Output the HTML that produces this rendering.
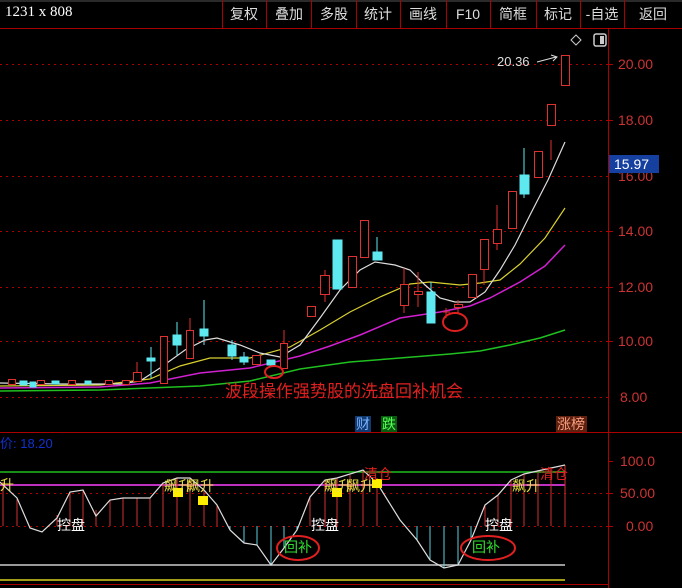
<!DOCTYPE html>
<html><head><meta charset="utf-8"><style>
html,body{margin:0;padding:0;background:#000;width:682px;height:588px;overflow:hidden}
svg{display:block}
text{font-family:"Liberation Sans","Noto Sans CJK SC",sans-serif}
</style></head><body>
<svg width="682" height="588" viewBox="0 0 682 588" xmlns="http://www.w3.org/2000/svg">
<rect width="682" height="588" fill="#000"/>
<!-- top bar -->
<line x1="0" y1="1" x2="682" y2="1" fill="none" stroke="#555"/>
<line x1="0" y1="28.5" x2="682" y2="28.5" stroke="#a00" />
<text x="5" y="16" fill="#fff" font-family="Liberation Serif,serif" font-size="15" style="font-family:'Liberation Serif',serif">1231 x 808</text>
<g stroke="#a00">
<line x1="222.5" y1="0" x2="222.5" y2="28"/><line x1="266.5" y1="0" x2="266.5" y2="28"/><line x1="311.5" y1="0" x2="311.5" y2="28"/><line x1="356.5" y1="0" x2="356.5" y2="28"/><line x1="400.5" y1="0" x2="400.5" y2="28"/><line x1="446.5" y1="0" x2="446.5" y2="28"/><line x1="490.5" y1="0" x2="490.5" y2="28"/><line x1="536.5" y1="0" x2="536.5" y2="28"/><line x1="580.5" y1="0" x2="580.5" y2="28"/><line x1="624.5" y1="0" x2="624.5" y2="28"/>
</g>
<g fill="#ddd" font-size="14" text-anchor="middle">
<text x="244" y="19">复权</text><text x="289" y="19">叠加</text><text x="334" y="19">多股</text><text x="378" y="19">统计</text><text x="423" y="19">画线</text><text x="468" y="19">F10</text><text x="513" y="19">简框</text><text x="558" y="19">标记</text><text x="602" y="19">-自选</text><text x="653" y="19">返回</text>
</g>
<!-- axis lines -->
<line x1="608.5" y1="29" x2="608.5" y2="588" stroke="#a00"/>
<line x1="0" y1="432.5" x2="682" y2="432.5" stroke="#a00"/>
<line x1="0" y1="584.5" x2="608" y2="584.5" stroke="#a00"/>
<!-- price grid -->
<g stroke="#a00" stroke-dasharray="2,4">
<line x1="0" y1="64.5" x2="608" y2="64.5"/><line x1="0" y1="120.5" x2="608" y2="120.5"/><line x1="0" y1="176.5" x2="608" y2="176.5"/><line x1="0" y1="231.5" x2="608" y2="231.5"/><line x1="0" y1="287.5" x2="608" y2="287.5"/><line x1="0" y1="341.5" x2="608" y2="341.5"/><line x1="0" y1="397.5" x2="608" y2="397.5"/>
<line x1="0" y1="493.5" x2="608" y2="493.5"/><line x1="0" y1="526.5" x2="608" y2="526.5"/>
</g>
<g fill="#c33" font-size="14">
<text x="618" y="69">20.00</text><text x="618" y="125">18.00</text><text x="618" y="181">16.00</text><text x="618" y="236">14.00</text><text x="618" y="292">12.00</text><text x="618" y="346">10.00</text><text x="620" y="402">8.00</text>
<text x="620" y="466">100.0</text><text x="620" y="498">50.00</text><text x="626" y="531">0.00</text>
</g>
<g stroke="#a00"><line x1="608" y1="64.5" x2="613" y2="64.5"/><line x1="608" y1="120.5" x2="613" y2="120.5"/><line x1="608" y1="231.5" x2="613" y2="231.5"/><line x1="608" y1="287.5" x2="613" y2="287.5"/><line x1="608" y1="341.5" x2="613" y2="341.5"/><line x1="608" y1="461.5" x2="613" y2="461.5"/><line x1="608" y1="493.5" x2="613" y2="493.5"/><line x1="608" y1="526.5" x2="613" y2="526.5"/></g>
<rect x="609" y="155" width="50" height="18" fill="#1540a0"/>
<text x="614" y="169" fill="#fff" font-size="14">15.97</text>
<!-- top icons -->
<path d="M576 35 L581 40 L576 45 L571 40 Z" fill="none" stroke="#ccc"/>
<rect x="594" y="34" width="12" height="12" rx="2" fill="none" stroke="#ccc" stroke-width="1.5"/><rect x="600" y="36" width="4" height="8" fill="#ccc"/>
<text x="497" y="66" fill="#ddd" font-size="13">20.36</text>
<path d="M537 62 L556 57 M551 55 L557 57 L553 61" stroke="#ddd" fill="none"/>
<!-- MAs -->
<polyline fill="none" stroke="#1fc01f" stroke-width="1.5" points="0,391 100,390 200,386 250,381 300,369 350,362 400,358 450,354 480,351 510,345 540,338 565,330"/>
<polyline fill="none" stroke="#d020d0" stroke-width="1.5" points="0,388 100,387 150,383 200,373 250,368 300,356 330,346 360,335 400,318 440,312 470,306 490,298 520,282 545,266 565,245"/>
<polyline fill="none" stroke="#d8d030" stroke-width="1.2" points="0,386 100,385 150,379 180,366 210,358 250,358 290,347 320,330 350,312 380,297 410,284 430,282 460,285 480,283 500,280 520,264 545,238 565,208"/>
<polyline fill="none" stroke="#ddd" stroke-width="1.2" points="0,383 60,384 120,384 140,381 160,368 185,350 205,340 217,338 240,345 260,353 280,357 300,345 320,318 340,290 360,270 375,262 395,265 410,270 425,285 440,298 455,302 470,302 485,292 500,270 515,245 530,215 548,180 565,142"/>
<!-- candles -->
<g stroke-width="1">
<g stroke="#e03030" fill="#000">
<rect x="8.5" y="379.5" width="7" height="5"/><rect x="37.5" y="380.5" width="7" height="4"/><rect x="68.5" y="380.5" width="7" height="4"/><rect x="105.5" y="380.5" width="7" height="4"/><rect x="122.5" y="380.5" width="7" height="4"/>
<line x1="137" y1="362" x2="137" y2="372"/><rect x="133.5" y="372.5" width="8" height="9"/>
<rect x="160.5" y="336.5" width="7" height="47"/>
<line x1="190" y1="318" x2="190" y2="330"/><rect x="186.5" y="330.5" width="7" height="28"/>
<rect x="252.5" y="355.5" width="8" height="9"/>
<line x1="284" y1="330" x2="284" y2="343"/><rect x="280.5" y="343.5" width="7" height="25"/>
<rect x="307.5" y="306.5" width="8" height="10"/>
<line x1="325" y1="270" x2="325" y2="275"/><line x1="325" y1="294" x2="325" y2="302"/><rect x="320.5" y="275.5" width="9" height="19"/>
<rect x="348.5" y="256.5" width="8" height="31"/>
<rect x="360.5" y="220.5" width="8" height="37"/>
<line x1="404" y1="268" x2="404" y2="313"/><rect x="400.5" y="284.5" width="8" height="21"/>
<line x1="418" y1="272" x2="418" y2="307"/><rect x="414.5" y="291.5" width="8" height="3"/>
<line x1="446" y1="308" x2="446" y2="318"/><line x1="443" y1="312" x2="450" y2="312"/>
<line x1="458" y1="300" x2="458" y2="313"/><rect x="454.5" y="304.5" width="8" height="3"/>
<rect x="468.5" y="274.5" width="8" height="23"/>
<line x1="484" y1="269" x2="484" y2="285"/><rect x="480.5" y="239.5" width="8" height="30"/>
<line x1="497" y1="205" x2="497" y2="250"/><rect x="493.5" y="229.5" width="8" height="14"/>
<rect x="508.5" y="191.5" width="8" height="37"/>
<rect x="534.5" y="151.5" width="8" height="26"/>
<line x1="551" y1="140" x2="551" y2="160"/><rect x="547.5" y="104.5" width="8" height="21"/>
<rect x="561.5" y="55.5" width="8" height="30"/>
</g>
<g stroke="#5ee8f0" fill="#5ee8f0">
<rect x="20" y="381" width="7" height="4"/><rect x="30" y="382" width="6" height="5"/><rect x="52" y="381" width="7" height="3"/><rect x="85" y="381" width="6" height="3"/>
<line x1="151" y1="347" x2="151" y2="378"/><rect x="147" y="358" width="8" height="3"/>
<line x1="177" y1="322" x2="177" y2="355"/><rect x="173" y="335" width="8" height="10"/>
<line x1="204" y1="300" x2="204" y2="345"/><rect x="200" y="329" width="8" height="7"/>
<line x1="232" y1="340" x2="232" y2="360"/><rect x="228" y="345" width="8" height="11"/>
<line x1="244" y1="352" x2="244" y2="365"/><rect x="240" y="357" width="8" height="5"/>
<rect x="267" y="360" width="8" height="5"/>
<rect x="333" y="240" width="9" height="49"/>
<line x1="377" y1="237" x2="377" y2="260"/><rect x="373" y="252" width="9" height="8"/>
<line x1="431" y1="282" x2="431" y2="323"/><rect x="427" y="292" width="8" height="31"/>
<line x1="524" y1="148" x2="524" y2="198"/><rect x="520" y="175" width="9" height="19"/>
</g>
</g>
<ellipse cx="274" cy="372" rx="9" ry="6" fill="none" stroke="#e02020" stroke-width="2"/>
<ellipse cx="455" cy="322" rx="12" ry="9" fill="none" stroke="#e02020" stroke-width="2"/>
<text x="225" y="397" fill="#e02020" font-size="17">波段操作强势股的洗盘回补机会</text>
<rect x="355" y="416" width="16" height="16" fill="#103a70"/><text x="356" y="429" fill="#7ab0ff" font-size="14">财</text>
<rect x="381" y="416" width="16" height="16" fill="#0a5a10"/><text x="382" y="429" fill="#5f5" font-size="14">跌</text>
<rect x="556" y="416" width="31" height="16" fill="#602010"/><text x="557" y="429" fill="#f8a080" font-size="14">涨榜</text>
<!-- indicator -->
<text x="0" y="448" fill="#1030d0" font-size="13">价: 18.20</text>
<line x1="0" y1="472" x2="565" y2="472" stroke="#20c020" stroke-width="1.5"/>
<line x1="0" y1="485" x2="565" y2="485" stroke="#c030c0" stroke-width="2"/>
<line x1="0" y1="565" x2="565" y2="565" stroke="#ccc" stroke-width="1.5"/>
<line x1="0" y1="580" x2="565" y2="580" stroke="#d8d020" stroke-width="1.5"/>
<g stroke="#d03030">
<line x1="3" y1="526" x2="3" y2="482"/><line x1="17" y1="526" x2="17" y2="498"/><line x1="57" y1="526" x2="57" y2="515"/><line x1="70" y1="526" x2="70" y2="492"/><line x1="83" y1="526" x2="83" y2="490"/><line x1="96" y1="526" x2="96" y2="510"/><line x1="110" y1="526" x2="110" y2="500"/><line x1="123" y1="526" x2="123" y2="498"/><line x1="137" y1="526" x2="137" y2="498"/><line x1="150" y1="526" x2="150" y2="498"/><line x1="163" y1="526" x2="163" y2="483"/><line x1="177" y1="526" x2="177" y2="478"/><line x1="190" y1="526" x2="190" y2="478"/><line x1="204" y1="526" x2="204" y2="490"/><line x1="217" y1="526" x2="217" y2="505"/>
<line x1="310" y1="526" x2="310" y2="497"/><line x1="325" y1="526" x2="325" y2="480"/><line x1="337" y1="526" x2="337" y2="478"/><line x1="350" y1="526" x2="350" y2="475"/><line x1="363" y1="526" x2="363" y2="470"/><line x1="377" y1="526" x2="377" y2="478"/>
<line x1="485" y1="526" x2="485" y2="505"/><line x1="498" y1="526" x2="498" y2="495"/><line x1="511" y1="526" x2="511" y2="480"/><line x1="524" y1="526" x2="524" y2="474"/><line x1="538" y1="526" x2="538" y2="470"/><line x1="551" y1="526" x2="551" y2="468"/><line x1="565" y1="526" x2="565" y2="465"/>
</g>
<g stroke="#5ed0e0">
<line x1="230" y1="526" x2="230" y2="530"/><line x1="244" y1="526" x2="244" y2="543"/><line x1="257" y1="526" x2="257" y2="545"/><line x1="271" y1="526" x2="271" y2="565"/><line x1="284" y1="526" x2="284" y2="548"/><line x1="297" y1="526" x2="297" y2="530"/>
<line x1="417" y1="526" x2="417" y2="540"/><line x1="430" y1="526" x2="430" y2="560"/><line x1="444" y1="526" x2="444" y2="568"/><line x1="458" y1="526" x2="458" y2="565"/><line x1="471" y1="526" x2="471" y2="540"/>
</g>
<polyline fill="none" stroke="#ddd" stroke-width="1.2" points="0,482 17,498 30,528 42,532 57,518 70,492 83,490 96,516 110,500 123,498 150,498 163,483 177,478 190,478 204,490 217,505 230,530 244,543 257,545 271,565 284,548 297,530 310,497 325,480 337,478 363,470 377,483 400,520 417,540 430,560 444,568 458,565 471,540 485,505 498,495 511,480 524,474 551,468 565,465"/>
<g fill="#ffee00"><rect x="173" y="488" width="10" height="9"/><rect x="198" y="496" width="10" height="9"/><rect x="332" y="488" width="10" height="9"/><rect x="372" y="479" width="10" height="9"/></g>
<g fill="#e8e040" font-size="14">
<text x="0" y="490">升</text><text x="164" y="491">飙升</text><text x="186" y="491">飙升</text><text x="324" y="491">飙升</text><text x="346" y="491">飙升</text><text x="512" y="491">飙升</text>
</g>
<g fill="#e02020" font-size="14"><text x="364" y="479">清仓</text><text x="540" y="479">清仓</text></g>
<g fill="#fff" font-size="14"><text x="57" y="530">控盘</text><text x="311" y="530">控盘</text><text x="485" y="530">控盘</text></g>
<g fill="#30e030" font-size="14"><text x="284" y="552">回补</text><text x="472" y="552">回补</text></g>
<ellipse cx="298" cy="548" rx="21" ry="12" fill="none" stroke="#e02020" stroke-width="2"/>
<ellipse cx="488" cy="548" rx="27" ry="12" fill="none" stroke="#e02020" stroke-width="2"/>
</svg>
</body></html>
